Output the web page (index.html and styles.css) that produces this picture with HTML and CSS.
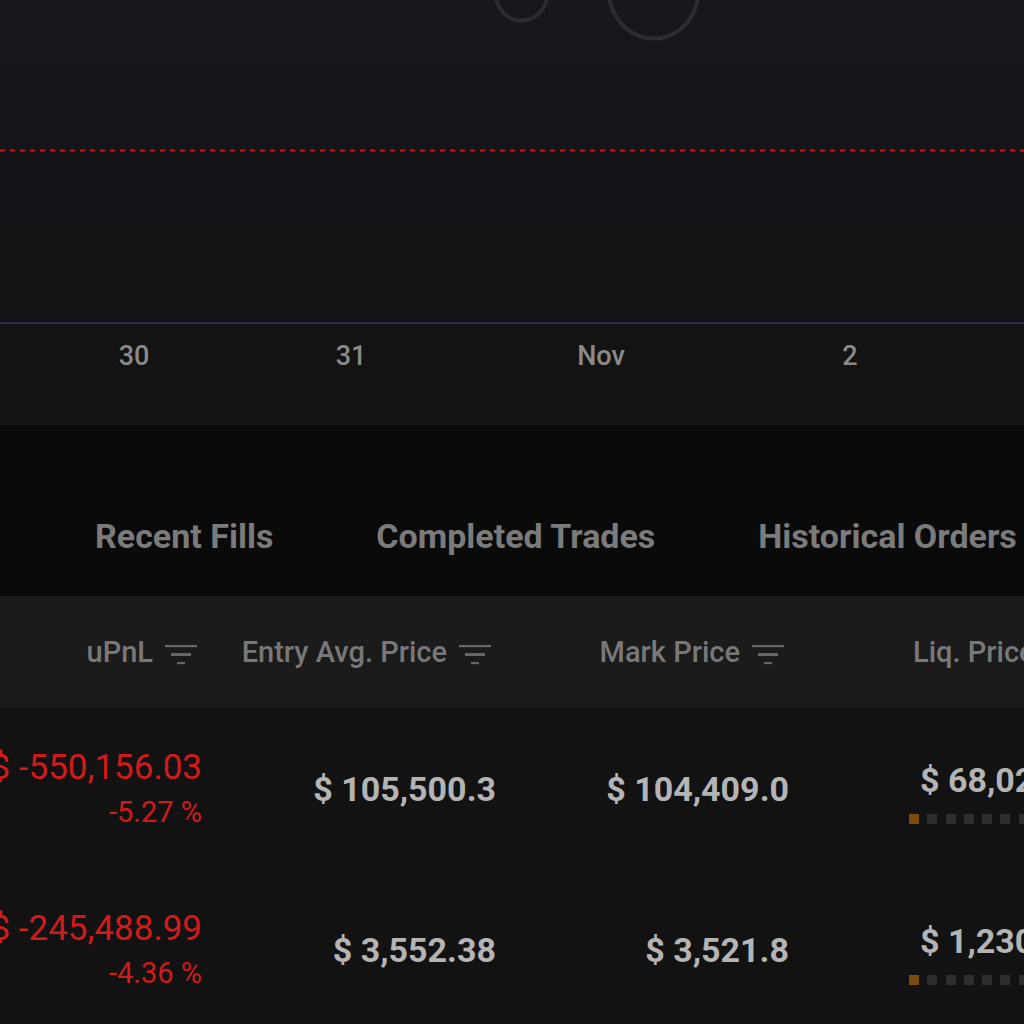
FILE: index.html
```html
<!DOCTYPE html>
<html lang="en">
<head>
<meta charset="utf-8">
<title>Positions</title>
<link rel="stylesheet" href="styles.css">
</head>
<body>
<div class="page">
  <section class="chart">
    <svg class="chart-svg" width="1024" height="322" viewBox="0 0 1024 322">
      <path class="curve" d="M496,-2 C502,28 541,28 547,-2"/>
      <path class="curve" d="M609,-2 C620,52 688,52 698,-2"/>
      <line class="liq-line" x1="0" y1="150.5" x2="1024" y2="150.5"/>
    </svg>
  </section>
  <section class="axis">
    <span class="tick" style="left:134px">30</span>
    <span class="tick" style="left:351px">31</span>
    <span class="tick" style="left:601px">Nov</span>
    <span class="tick" style="left:850px">2</span>
  </section>
  <nav class="tabs">
    <span class="tab">Recent Fills</span>
    <span class="tab">Completed Trades</span>
    <span class="tab">Historical Orders</span>
  </nav>
  <div class="table">
    <div class="row head">
      <div class="cell num"><span>uPnL</span><svg class="filter" width="32" height="20" viewBox="0 0 32 20"><rect x="0" y="0" width="32" height="2.2"/><rect x="6" y="8" width="20" height="3"/><rect x="12" y="17" width="8" height="2.2"/></svg></div>
      <div class="cell num"><span>Entry Avg. Price</span><svg class="filter" width="32" height="20" viewBox="0 0 32 20"><rect x="0" y="0" width="32" height="2.2"/><rect x="6" y="8" width="20" height="3"/><rect x="12" y="17" width="8" height="2.2"/></svg></div>
      <div class="cell num"><span>Mark Price</span><svg class="filter" width="32" height="20" viewBox="0 0 32 20"><rect x="0" y="0" width="32" height="2.2"/><rect x="6" y="8" width="20" height="3"/><rect x="12" y="17" width="8" height="2.2"/></svg></div>
      <div class="cell liq-head"><span>Liq. Price</span></div>
    </div>
    <div class="row body">
      <div class="cell pnl">
        <span class="pnl-val">$ -550,156.03</span>
        <span class="pnl-pct">-5.27 %</span>
      </div>
      <div class="cell num"><span class="val">$ 105,500.3</span></div>
      <div class="cell num"><span class="val">$ 104,409.0</span></div>
      <div class="cell liq">
        <span class="val liq-val">$ 68,025.1</span>
        <div class="risk"><i class="on"></i><i></i><i></i><i></i><i></i><i></i><i></i><i></i><i></i></div>
      </div>
    </div>
    <div class="row body">
      <div class="cell pnl">
        <span class="pnl-val">$ -245,488.99</span>
        <span class="pnl-pct">-4.36 %</span>
      </div>
      <div class="cell num"><span class="val">$ 3,552.38</span></div>
      <div class="cell num"><span class="val">$ 3,521.8</span></div>
      <div class="cell liq">
        <span class="val liq-val">$ 1,230.42</span>
        <div class="risk"><i class="on"></i><i></i><i></i><i></i><i></i><i></i><i></i><i></i><i></i></div>
      </div>
    </div>
  </div>
</div>
</body>
</html>
```

FILE: styles.css
```css
html, body {
  margin: 0;
  padding: 0;
  background: #121212;
}
body {
  font-family: Roboto, "Noto Sans", sans-serif;
  overflow: hidden;
  width: 1024px;
  height: 1024px;
}
.page {
  display: flex;
  flex-direction: column;
  width: 1024px;
  white-space: nowrap;
}
.chart {
  height: 322px;
  background: linear-gradient(180deg, #17171c 0%, #141418 55%, #121314 100%);
}
.chart-svg {
  display: block;
}
.curve {
  fill: none;
  stroke: #2b2b30;
  stroke-width: 4;
}
.liq-line {
  stroke: #c81a1a;
  stroke-width: 2;
  stroke-dasharray: 5 5;
}
.axis {
  position: relative;
  height: 101px;
  border-top: 2px solid #2f2e45;
  background: #131313;
}
.tick {
  position: absolute;
  top: 16px;
  transform: translateX(-50%);
  font-size: 27px;
  line-height: 32px;
  font-weight: 500;
  color: #8a8a8a;
}
.tabs {
  display: flex;
  gap: 103px;
  height: 171px;
  box-sizing: border-box;
  padding: 91px 0 0 95px;
  background: #0a0a0a;
}
.tab {
  font-size: 34px;
  line-height: 40px;
  font-weight: 700;
  color: #7b7b7b;
}
.table {
  display: flex;
  flex-direction: column;
}
.row {
  display: grid;
  grid-template-columns: 202px 294px 293px 1fr;
  align-items: center;
}
.row.head {
  height: 112px;
  background: #1b1b1b;
}
.row.body {
  height: 161px;
  background: #121212;
}
.cell {
  min-width: 0;
}
.cell.num {
  display: flex;
  justify-content: flex-end;
  align-items: center;
}
.head .cell {
  font-size: 29px;
  line-height: 34px;
  font-weight: 500;
  color: #787878;
}
.head .cell.num {
  gap: 12px;
  padding-right: 5px;
}
.filter {
  fill: #666666;
  margin-top: 6px;
  flex: none;
}
.liq-head {
  padding-left: 124px;
}
.val {
  font-size: 34px;
  line-height: 40px;
  font-weight: 700;
  color: #b4b4b4;
}
.pnl {
  display: flex;
  flex-direction: column;
  align-items: flex-end;
}
.pnl-val {
  font-size: 35px;
  line-height: 40px;
  color: #d11b1b;
}
.pnl-pct {
  margin-top: 7px;
  font-size: 29px;
  line-height: 34px;
  color: #d11b1b;
}
.liq {
  display: flex;
  flex-direction: column;
  padding-left: 120px;
  margin-top: 6px;
}
.liq-val {
  padding-left: 11px;
}
.risk {
  display: flex;
  gap: 8.3px;
  margin-top: 14px;
}
.risk i {
  display: block;
  width: 10px;
  height: 10px;
  flex: none;
  background: #2e2e2e;
}
.risk i.on {
  background: #7a4d0f;
}
```
